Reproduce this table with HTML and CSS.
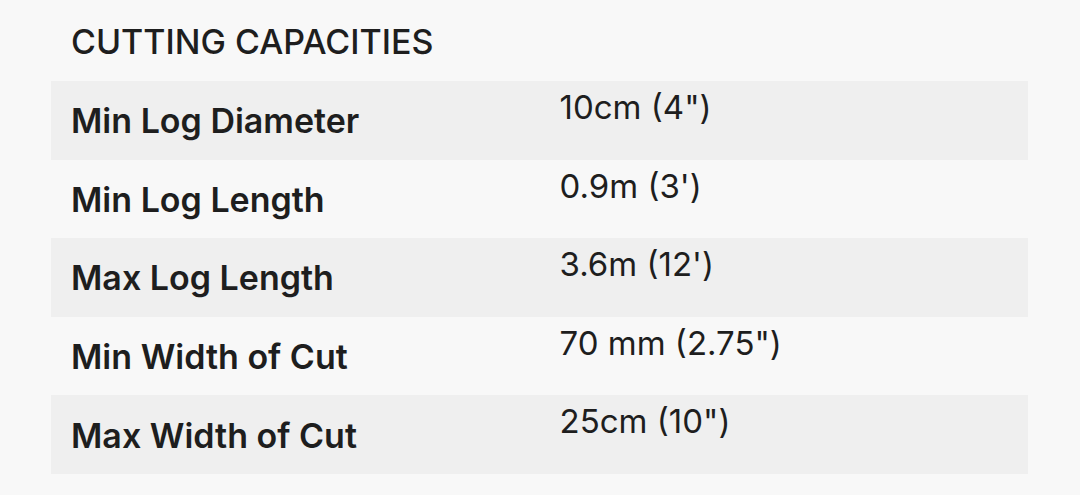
FILE: index.html
```html
<!DOCTYPE html>
<html lang="en">
<head>
<meta charset="utf-8">
<link rel="stylesheet" href="styles.css">
</head>
<body>
<section class="specs">
  <h2 class="specs-title">CUTTING CAPACITIES</h2>
  <div class="specs-table">
    <div class="row alt"><div class="label">Min Log Diameter</div><div class="value">10cm (4")</div></div>
    <div class="row"><div class="label">Min Log Length</div><div class="value">0.9m (3')</div></div>
    <div class="row alt"><div class="label">Max Log Length</div><div class="value">3.6m (12')</div></div>
    <div class="row"><div class="label">Min Width of Cut</div><div class="value">70 mm (2.75")</div></div>
    <div class="row alt"><div class="label">Max Width of Cut</div><div class="value">25cm (10")</div></div>
  </div>
</section>
</body>
</html>
```

FILE: styles.css
```css
html, body {
  margin: 0;
  padding: 0;
  background: #f8f8f8;
}
body {
  font-family: Inter, "Noto Sans", sans-serif;
  color: #1e1e1e;
  width: 1080px;
  height: 495px;
  overflow: hidden;
}
.specs {
  padding: 0 52px 0 51px;
}
.specs-title {
  margin: 0;
  padding: 22px 0 0 20px;
  height: 81px;
  box-sizing: border-box;
  font-size: 34px;
  font-weight: 500;
  line-height: 40px;
  letter-spacing: 0;
}
.specs-table {
  display: flex;
  flex-direction: column;
}
.row {
  display: grid;
  grid-template-columns: 1fr 1fr;
  height: 78.6px;
}
.row.alt {
  background: #efefef;
}
.label {
  align-self: center;
  padding-left: 20px;
  font-size: 34px;
  font-weight: 600;
  line-height: 40px;
  padding-top: 2px;
}
.value {
  align-self: start;
  padding-left: 20px;
  padding-top: 6px;
  font-size: 33px;
  font-weight: 400;
  line-height: 40px;
}
```
